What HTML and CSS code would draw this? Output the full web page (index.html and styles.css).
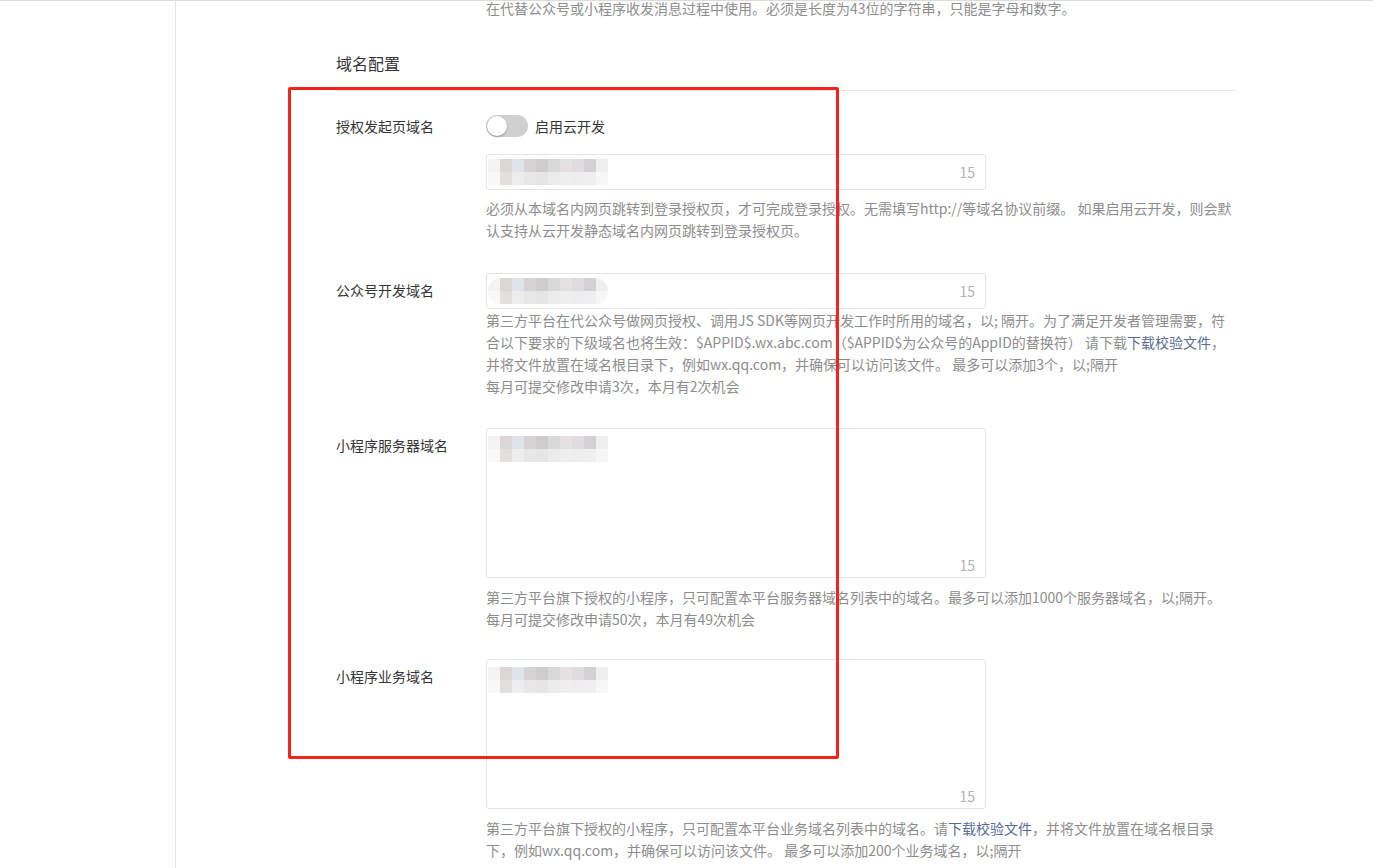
FILE: index.html
```html
<html lang="zh-CN">
<head>
  <meta charset="UTF-8" />
  <meta name="viewport" content="width=device-width, initial-scale=1.0" />
  <title>开发配置</title>
  <link rel="stylesheet" href="styles.css">
</head>
<body>
  <div class="page">
    <!-- Barra lateral vacía -->
    <div class="sidebar"></div>

    <div class="main">
      <p class="desc top-desc">在代替公众号或小程序收发消息过程中使用。必须是长度为43位的字符串，只能是字母和数字。</p>

      <h3 class="section-title">域名配置</h3>

      <!-- 授权发起页域名 -->
      <div class="row row-first">
        <div class="label label-top">授权发起页域名</div>
        <div class="field">
          <div class="switch-line">
            <span class="switch"><span class="knob"></span></span>
            <span class="switch-text">启用云开发</span>
          </div>
          <div class="input">
            <span class="blur"></span>
            <span class="counter">15</span>
          </div>
          <p class="desc">必须从本域名内网页跳转到登录授权页，才可完成登录授权。无需填写http://等域名协议前缀。 如果启用云开发，则会默认支持从云开发静态域名内网页跳转到登录授权页。</p>
        </div>
      </div>

      <!-- 公众号开发域名 -->
      <div class="row row-second">
        <div class="label">公众号开发域名</div>
        <div class="field">
          <div class="input">
            <span class="blur blur-round"></span>
            <span class="counter">15</span>
          </div>
          <p class="desc">第三方平台在代公众号做网页授权、调用JS SDK等网页开发工作时所用的域名，以; 隔开。为了满足开发者管理需要，符合以下要求的下级域名也将生效：$APPID$.wx.abc.com（$APPID$为公众号的AppID的替换符） 请下载<a class="link">下载校验文件</a>，并将文件放置在域名根目录下，例如wx.qq.com，并确保可以访问该文件。 最多可以添加3个，以;隔开</p>
          <p class="desc">每月可提交修改申请3次，本月有2次机会</p>
        </div>
      </div>

      <!-- 小程序服务器域名 -->
      <div class="row row-third">
        <div class="label">小程序服务器域名</div>
        <div class="field">
          <div class="textarea">
            <span class="blur"></span>
            <span class="counter">15</span>
          </div>
          <p class="desc">第三方平台旗下授权的小程序，只可配置本平台服务器域名列表中的域名。最多可以添加1000个服务器域名，以;隔开。</p>
          <p class="desc">每月可提交修改申请50次，本月有49次机会</p>
        </div>
      </div>

      <!-- 小程序业务域名 -->
      <div class="row row-fourth">
        <div class="label">小程序业务域名</div>
        <div class="field">
          <div class="textarea">
            <span class="blur"></span>
            <span class="counter">15</span>
          </div>
          <p class="desc">第三方平台旗下授权的小程序，只可配置本平台业务域名列表中的域名。请<a class="link">下载校验文件</a>，并将文件放置在域名根目录下，例如wx.qq.com，并确保可以访问该文件。 最多可以添加200个业务域名，以;隔开</p>
        </div>
      </div>
    </div>
  </div>

  <!-- Marco rojo de anotación -->
  <div class="mark"></div>
</body>
</html>
```

FILE: styles.css
```css
/* Estilos generales */
body {
  margin: 0;
  font-family: "Noto Sans CJK SC", "Noto Sans", sans-serif;
  font-size: 14px;
  color: #353535;
  background: #fff;
  overflow: hidden;
}
.page {
  display: flex;
  border-top: 1px solid #dcdcdc;
  min-height: 100vh;
  box-sizing: border-box;
}
.sidebar {
  width: 175px;
  border-right: 1px solid #e4e4e4;
  flex-shrink: 0;
}
.main {
  margin-left: 160px;
  width: 899px;
}
p {
  margin: 0;
}
.desc {
  color: #8d8d8d;
  line-height: 22px;
  width: 752px;
}
.top-desc {
  margin-top: -4px;
  padding-left: 150px;
}
.section-title {
  margin: 32px 0 0;
  font-size: 16px;
  font-weight: normal;
  line-height: 24px;
  padding-bottom: 15px;
  border-bottom: 1px solid #e7e7e7;
}
/* Filas del formulario */
.row {
  display: flex;
}
.row-first { margin-top: 24px; }
.row-second { margin-top: 32px; }
.row-third { margin-top: 31px; }
.row-fourth { margin-top: 29px; }
.label {
  width: 150px;
  flex-shrink: 0;
  line-height: 22px;
  padding-top: 6px;
}
.label.label-top {
  padding-top: 0;
}
.field {
  width: 752px;
}
/* Interruptor */
.switch-line {
  display: flex;
  align-items: center;
  height: 22px;
}
.switch {
  position: relative;
  width: 42px;
  height: 22px;
  border-radius: 11px;
  background: #cfcfcf;
}
.knob {
  position: absolute;
  left: 1px;
  top: 1px;
  width: 20px;
  height: 20px;
  border-radius: 50%;
  background: #fff;
  box-shadow: 0 1px 2px rgba(0, 0, 0, 0.3);
}
.switch-text {
  margin-left: 7px;
}
/* Campos de texto */
.input,
.textarea {
  width: 500px;
  box-sizing: border-box;
  border: 1px solid #e4e4e4;
  border-radius: 3px;
  display: flex;
  justify-content: space-between;
  padding: 0 10px 0 1px;
}
.input {
  height: 36px;
  align-items: center;
}
.row-first .input {
  margin-top: 17px;
}
.textarea {
  height: 150px;
  align-items: stretch;
  padding-top: 7px;
  padding-bottom: 1px;
}
.textarea .blur {
  align-self: flex-start;
}
.textarea .counter {
  align-self: flex-end;
}
.counter {
  color: #b2b2b2;
  line-height: 22px;
}
/* Texto pixelado */
.blur {
  width: 120px;
  height: 26px;
  background:
    linear-gradient(90deg, #f5f3f2 0 12px, #dbd6d6 12px 24px, #e0e3e7 24px 36px, #d6d3d4 36px 48px, #cfcccc 48px 60px, #d8d9d8 60px 72px, #e4e0e0 72px 84px, #dedcdf 84px 96px, #d5d0d4 96px 108px, #efefef 108px 120px) top / 100% 13px no-repeat,
    linear-gradient(90deg, #f9f8f7 0 12px, #e2dfdf 12px 24px, #ededee 24px 36px, #e8e7e8 36px 48px, #e6e5e6 48px 60px, #ebebeb 60px 72px, #efeeee 72px 84px, #edecee 84px 96px, #f0eff0 96px 108px, #f7f7f7 108px 120px) bottom / 100% 13px no-repeat;
}
.blur-round {
  border-radius: 13px;
}
.row-first .desc {
  margin-top: 7px;
}
.row-third .textarea + .desc,
.row-fourth .textarea + .desc {
  margin-top: 8px;
}
.link {
  color: #576b95;
  text-decoration: none;
}
/* Marco de anotación sobre el contenido */
.mark {
  position: absolute;
  left: 288px;
  top: 87px;
  width: 545px;
  height: 666px;
  border: 3px solid #f2231b;
  border-radius: 2px;
  pointer-events: none;
}
```
